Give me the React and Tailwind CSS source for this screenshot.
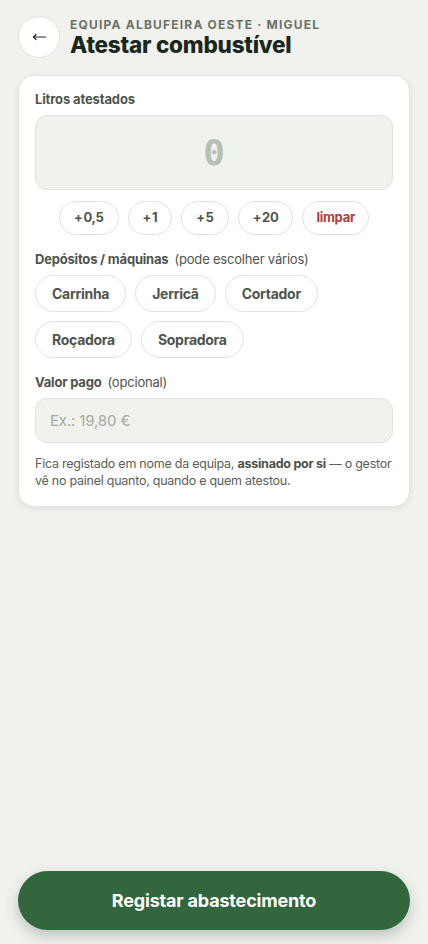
import { useState } from 'react';

const AMOUNTS = ['0,5', '1', '5', '20'];
const TANKS = ['Carrinha', 'Jerricã', 'Cortador', 'Roçadora', 'Sopradora'];

function App() {
  const [litros, setLitros] = useState(0);
  const [selected, setSelected] = useState([]);
  const [valor, setValor] = useState('');

  const addLitros = (v) => setLitros((l) => Math.round((l + parseFloat(v.replace(',', '.'))) * 10) / 10);

  const toggleTank = (t) =>
    setSelected((s) => (s.includes(t) ? s.filter((x) => x !== t) : [...s, t]));

  return (
    <main
      className="min-h-screen bg-[#f1f2ee] flex flex-col px-[18px] pt-4 pb-[14px] text-[#4f554c]"
      style={{ fontFamily: 'Inter, "Noto Sans", sans-serif' }}
    >
      {/* header */}
      <div className="flex items-center gap-[10px]">
        <button className="w-[42px] h-[42px] rounded-full bg-white border border-[#e2e3dc] flex items-center justify-center shrink-0">
          <svg width="15" height="10" viewBox="0 0 15 10" fill="none" stroke="#1d2a1f" strokeWidth="1.2" strokeLinecap="round">
            <path d="M1.5 5H13.5" />
            <path d="M4 2.5L1.5 5L4 7.5" />
          </svg>
        </button>
        <div className="flex flex-col gap-[2px]">
          <span className="text-[12px] font-bold uppercase tracking-[0.1em] text-[#6b7268] leading-[13px]">
            Equipa Albufeira Oeste · Miguel
          </span>
          <h1 className="text-[22.5px] font-extrabold text-[#1b271d] leading-[23px] tracking-[-0.01em]">
            Atestar combustível
          </h1>
        </div>
      </div>

      {/* card */}
      <section className="mt-[17px] bg-white rounded-[16px] border border-[#e4e5de] shadow-[0_2px_6px_rgba(0,0,0,0.08)] px-4 pt-[15px] pb-[17px]">
        <label className="block text-[13px] font-bold leading-[16px] tracking-[-0.01em]">Litros atestados</label>
        <div className="mt-2 h-[75px] rounded-[12px] bg-[#f0f2ed] border border-[#e1e3db] flex items-center justify-center">
          <span
            className="text-[36px] font-bold text-[#b6c0b5]"
            style={{ fontFamily: '"DejaVu Sans Mono", monospace' }}
          >
            {String(litros).replace('.', ',')}
          </span>
        </div>

        <div className="mt-[11px] flex justify-center gap-[9px]">
          {AMOUNTS.map((a) => (
            <button
              key={a}
              onClick={() => addLitros(a)}
              className="h-[34px] px-[14px] rounded-full border border-[#e2e3dc] bg-white text-[13px] font-bold text-[#4f554c] tracking-[-0.02em]"
            >
              +{'\u200A'}{a}
            </button>
          ))}
          <button
            onClick={() => setLitros(0)}
            className="h-[34px] px-[13px] rounded-full border border-[#e2e3dc] bg-white text-[13px] font-bold text-[#b23b3b] tracking-[-0.02em]"
          >
            limpar
          </button>
        </div>

        <p className="mt-4 text-[13px] leading-[16px] tracking-[-0.015em]">
          <span className="font-bold">Depósitos / máquinas</span>
          <span className="ml-[6px]">(pode escolher vários)</span>
        </p>
        <div className="mt-2 flex flex-wrap gap-[9px]">
          {TANKS.map((t) => {
            const on = selected.includes(t);
            return (
              <button
                key={t}
                onClick={() => toggleTank(t)}
                className={
                  on
                    ? 'h-[37px] px-4 rounded-full border border-[#32663c] bg-[#32663c] text-white text-[14px] font-bold tracking-[-0.02em]'
                    : 'h-[37px] px-4 rounded-full border border-[#e2e3dc] bg-white text-[#4f554c] text-[14px] font-bold tracking-[-0.02em]'
                }
              >
                {t}
              </button>
            );
          })}
        </div>

        <p className="mt-4 text-[13px] leading-[16px] tracking-[-0.015em]">
          <span className="font-bold">Valor pago</span>
          <span className="ml-[6px]">(opcional)</span>
        </p>
        <input
          value={valor}
          onChange={(e) => setValor(e.target.value)}
          placeholder="Ex.: 19,80 €"
          className="mt-2 w-full h-[45px] rounded-[12px] bg-[#f0f2ed] border border-[#e1e3db] px-[14px] text-[15px] tracking-[-0.01em] text-[#1b271d] placeholder:text-[#a3aa9f] outline-none"
        />

        <p className="mt-[12px] text-[12.5px] leading-[17px] tracking-[-0.02em] text-[#5a6057]">
          Fica registado em nome da equipa, <span className="font-bold text-[#4a5047]">assinado por si</span> — o gestor vê no painel quanto, quando e quem atestou.
        </p>
      </section>

      <button className="mt-auto h-[59px] w-full rounded-full bg-[#32663c] text-white text-[18px] font-bold tracking-[-0.01em] shadow-[0_6px_14px_rgba(30,60,35,0.25)]">
        Registar abastecimento
      </button>
    </main>
  );
}

export default App;
